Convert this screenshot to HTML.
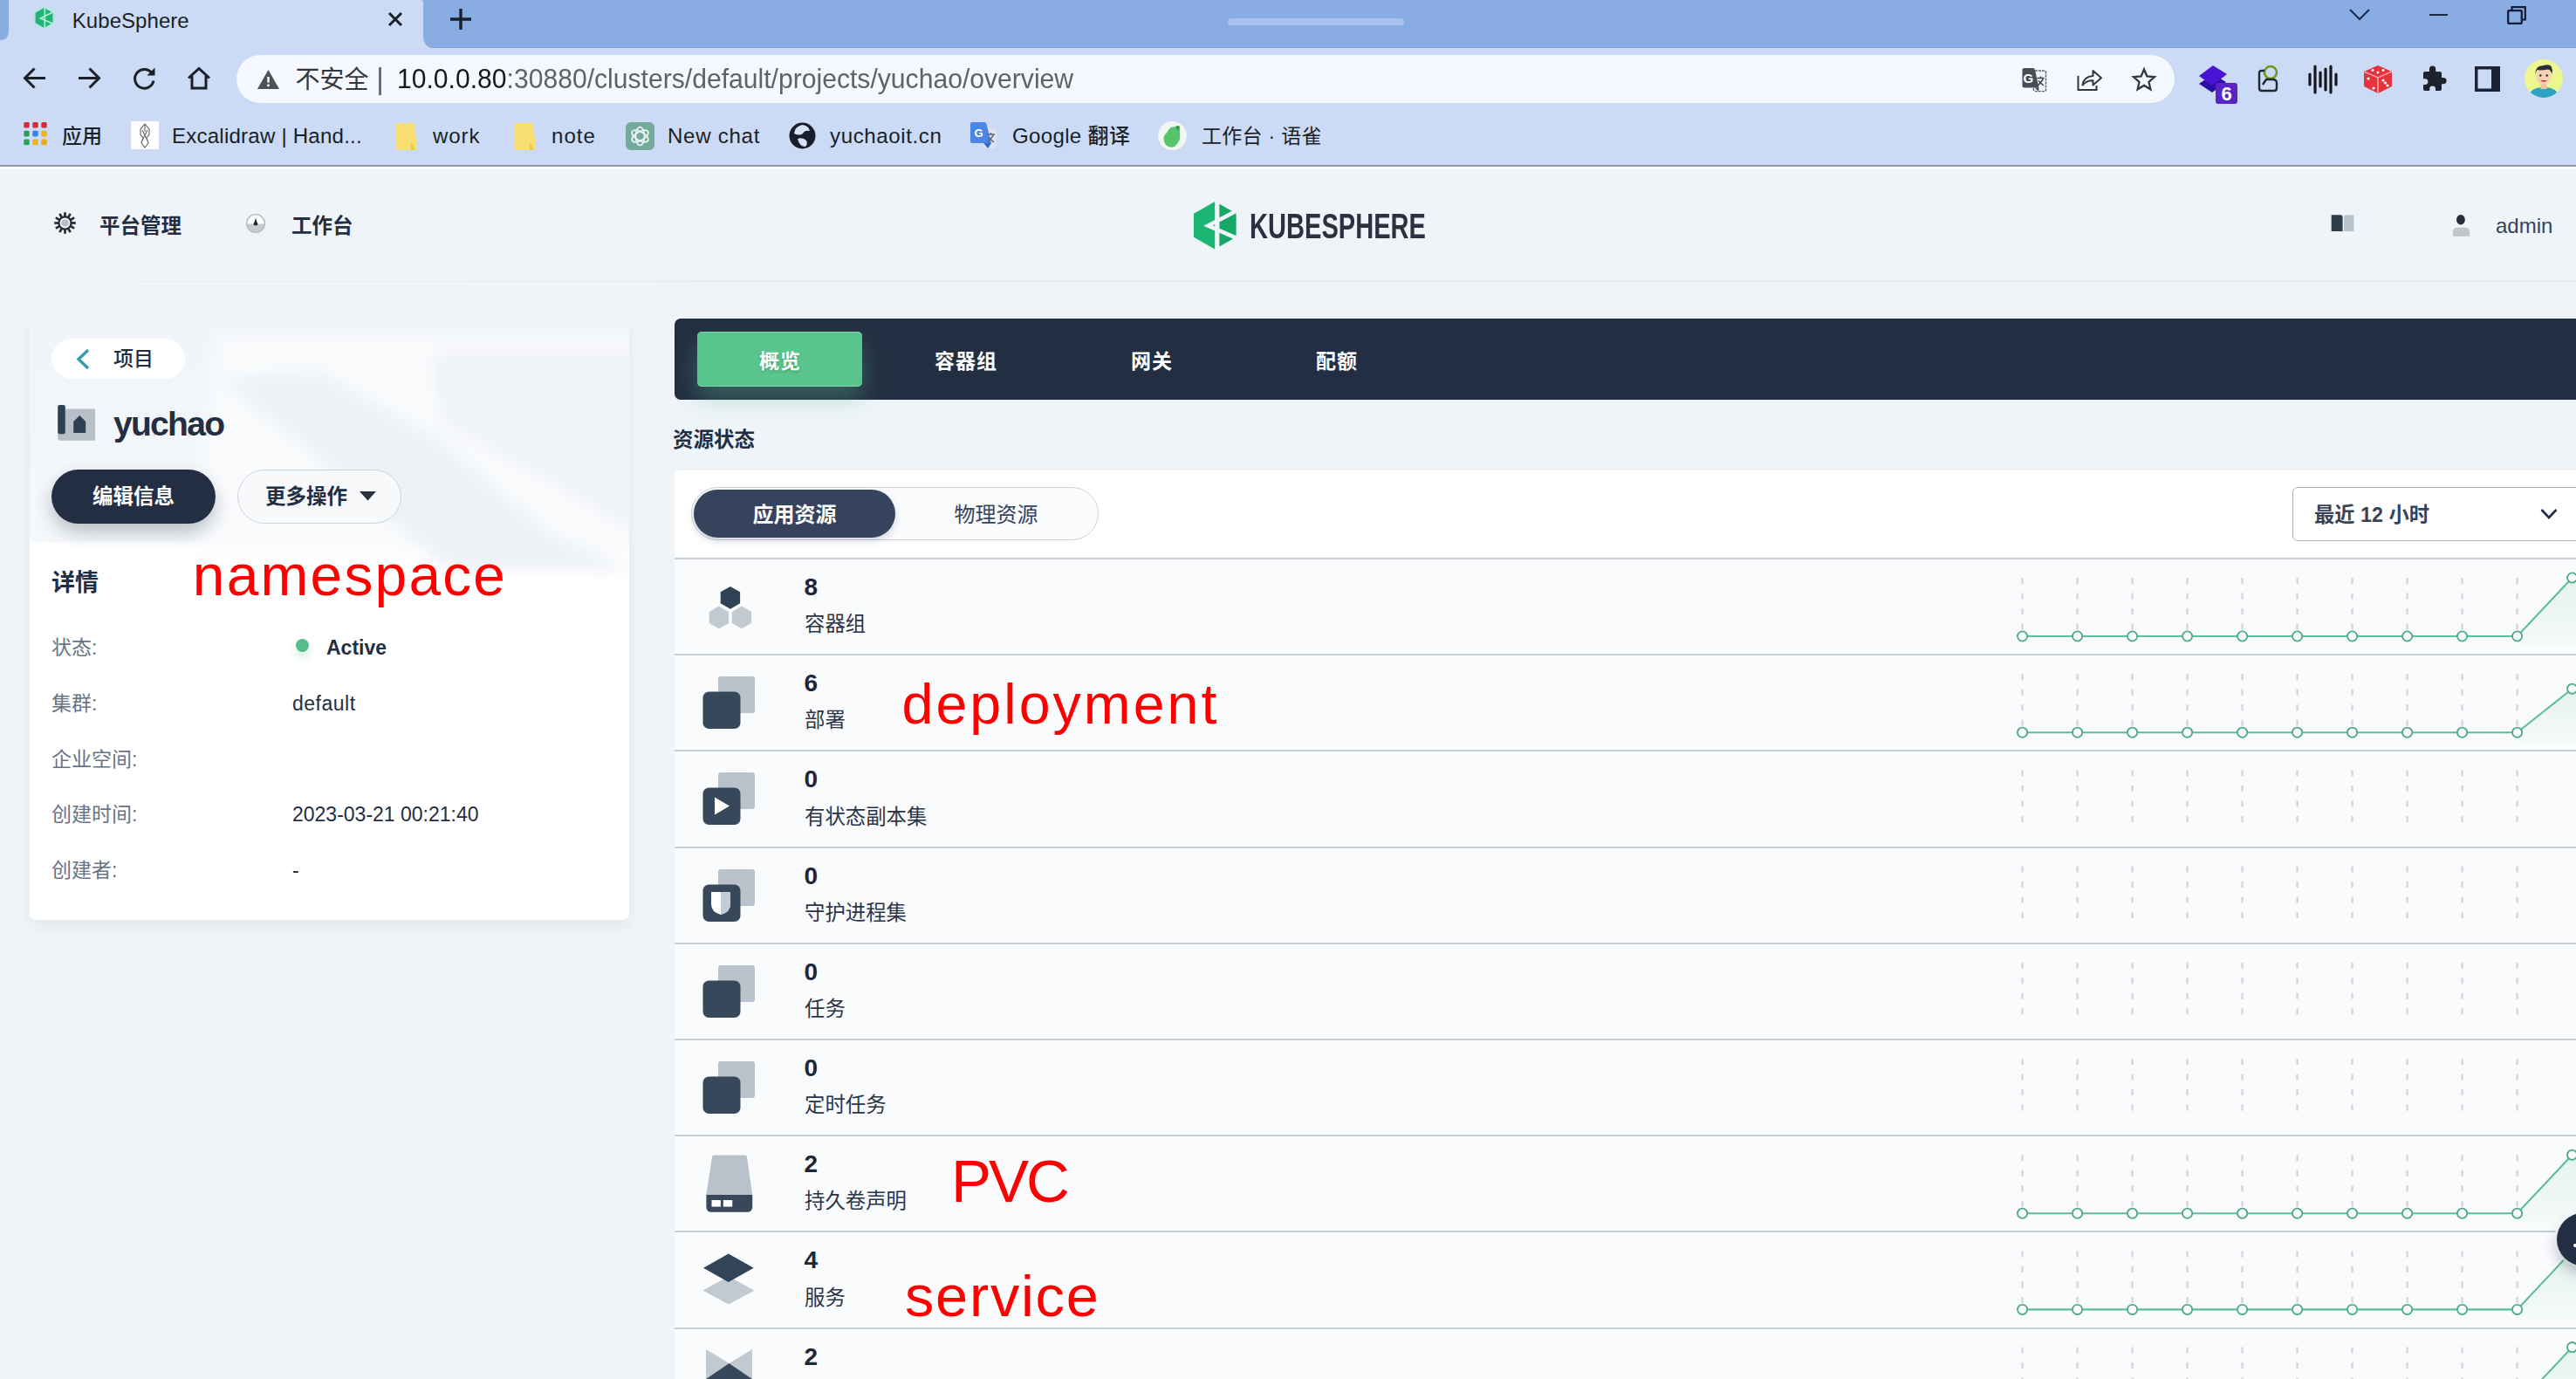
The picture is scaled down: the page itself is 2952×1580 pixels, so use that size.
<!DOCTYPE html>
<html lang="zh-CN">
<head>
<meta charset="utf-8">
<title>KubeSphere</title>
<style>
html,body{margin:0;padding:0}
body{width:2952px;height:1580px;overflow:hidden;position:relative;background:#eff4f9;font-family:"Liberation Sans","Noto Sans CJK SC",sans-serif;color:#242e42}
.a{position:absolute;white-space:nowrap}
svg{position:absolute;overflow:visible}
/* ---------- browser chrome ---------- */
#tabstrip{left:0;top:0;width:2952px;height:56px;background:#89ace3}
#tab{left:10px;top:0;width:474.5px;height:56px;background:#cbdbf5;border-radius:0 3px 0 0}
#toolbar{left:0;top:55px;width:2952px;height:135px;background:#cbdbf5}
#tbline{left:0;top:188.5px;width:2952px;height:2.5px;background:#8f98a6}
#omni{left:271px;top:63px;width:2221px;height:55px;border-radius:28px;background:#f5f8fe}
.ct{font-size:24px;line-height:30px;color:#1b1f27}
.bm{font-size:24.1px;line-height:30px;color:#1b1f27;top:140.5px;letter-spacing:.6px}
/* ---------- page ---------- */
#hline{left:0;top:322px;width:2952px;height:1px;background:linear-gradient(90deg,#eaeff4 0%,#e3e8ee 30%,#dfe4ea 100%)}
.nav{font-size:23.5px;line-height:30px;font-weight:700;color:#242e42;top:244px}
#tabs{left:773px;top:365px;width:2300px;height:93px;border-radius:7px;background:#242e42}
#tabon{left:799px;top:380px;width:189px;height:63px;border-radius:5px;background:#5ac48d;box-shadow:0 14px 26px rgba(85,188,138,.36), inset 0 1px 0 rgba(255,255,255,.25), inset 0 -1px 0 rgba(255,255,255,.25)}
.tb{font-size:23px;line-height:30px;font-weight:700;color:#fff;top:398.5px;width:189px;text-align:center;letter-spacing:1px;text-indent:1px}
#lcard{left:34px;top:364px;width:687px;height:690px;border-radius:7px;background:#fff;box-shadow:0 8px 14px rgba(36,46,66,.05);overflow:hidden}
#limg{left:0;top:0;width:687px;height:257px;background:linear-gradient(180deg,#f0f4f9 0%,#f2f6fa 40%,#f5f8fb 100%)}
.lab{font-size:23px;line-height:30px;color:#687386;left:59px}
.val{font-size:23px;line-height:30px;color:#242e42;left:335px}
.red{color:#ff0000;font-size:69px;line-height:80px;font-family:"Liberation Sans",sans-serif}
#rcard{left:773px;top:539px;width:2300px;height:1100px;background:#fff}
.row{left:773px;width:2300px;height:109px;background:#f9fbfd;border-top:2px solid #c9ced5}
.num{font-size:28px;line-height:30px;font-weight:700;color:#1f2636;left:921.5px}
.nm{font-size:23.4px;line-height:30px;color:#2b3446;left:922px}
</style>
</head>
<body>
<!-- ================= BROWSER CHROME ================= -->
<div class="a" id="tabstrip"></div>
<div class="a" style="left:498px;top:54px;width:2454px;height:1.6px;background:#7c9fd6"></div><div class="a" id="tab"></div>
<div class="a" id="toolbar"></div>
<div class="a" id="tbline"></div><div class="a" style="left:0;top:191px;width:2952px;height:2px;background:#fdfeff"></div>
<div class="a" id="omni"></div>

<!-- tab flare corners -->
<svg style="left:0;top:0" width="520" height="56"><path d="M0 56 V46 Q10 46 10 36 V56Z" fill="#cbdbf5"/><path d="M484.5 38 Q484.5 56 500 56 H484.5Z" fill="#cbdbf5"/></svg>
<!-- favicon -->
<svg style="left:36px;top:6px" width="30" height="30" viewBox="36 6 30 30"><path d="M50.5 8.2 L61.1 14.3 L61.1 26.5 L50.5 32.6 L39.9 26.5 L39.9 14.3Z" fill="#1fb376" stroke="#a9ead0" stroke-width="1.4"/><path d="M51.3 7.5 V33.3" stroke="#b5f0da" stroke-width="1.7"/><path d="M61.5 13.5 L46.5 21 L61.5 27.5" stroke="#b5f0da" stroke-width="1.7" fill="none"/></svg>
<div class="a ct" style="left:82.8px;top:8.5px;font-size:24px;letter-spacing:.05px">KubeSphere</div>
<svg style="left:444px;top:13px" width="18" height="18" viewBox="0 0 18 18"><path d="M2 2 L16 16 M16 2 L2 16" stroke="#1b1f27" stroke-width="3" fill="none"/></svg>
<svg style="left:515px;top:9px" width="26" height="26" viewBox="0 0 26 26"><path d="M13 1 V25 M1 13 H25" stroke="#1b1f27" stroke-width="3.4" fill="none"/></svg>
<div class="a" style="left:1407px;top:21px;width:202px;height:8px;border-radius:4px;background:#a9c3ee"></div>
<!-- window controls -->
<svg style="left:2692px;top:8px" width="24" height="18" viewBox="0 0 24 18"><path d="M1 3 L12 14 L23 3" stroke="#1b2a4a" stroke-width="2" fill="none"/></svg>
<div class="a" style="left:2784px;top:16px;width:21px;height:2px;background:#1b2a4a"></div>
<svg style="left:2873px;top:7px" width="22" height="21" viewBox="0 0 22 21"><rect x="1.2" y="5.2" width="15.6" height="14.6" rx=".8" stroke="#131d36" stroke-width="2.3" fill="none"/><path d="M5.5 5 V1.2 H20.8 V15.5 H17" stroke="#131d36" stroke-width="2.2" fill="none"/></svg>
<!-- nav buttons -->
<svg style="left:26px;top:77px" width="28" height="26" viewBox="0 0 28 26"><path d="M26 12.5 H3 M13.5 1.5 L2.5 12.5 L13.5 23.5" stroke="#1b1f27" stroke-width="3" fill="none" stroke-linejoin="miter"/></svg>
<svg style="left:88px;top:77px" width="28" height="26" viewBox="0 0 28 26"><path d="M2 12.5 H25 M14.5 1.5 L25.5 12.5 L14.5 23.5" stroke="#1b1f27" stroke-width="3" fill="none"/></svg>
<svg style="left:151px;top:76px" width="30" height="28" viewBox="0 0 30 28"><path d="M23.5 8.5 A10.8 10.8 0 1 0 25 16.5" stroke="#1b1f27" stroke-width="3" fill="none"/><path d="M26.5 1.5 V10.5 H17.5Z" fill="#1b1f27"/></svg>
<svg style="left:214px;top:76px" width="28" height="28" viewBox="0 0 28 28"><path d="M2 13.5 L14 2.5 L26 13.5 M6 11 V25 H22 V11" stroke="#1b1f27" stroke-width="3" fill="none" stroke-linejoin="miter"/></svg>
<!-- omnibox content -->
<svg style="left:295px;top:80.3px" width="25" height="22" viewBox="0 0 25 22"><path d="M12.5 0 L25 22 H0Z" fill="#4d5056"/><path d="M12.5 8 V14.6" stroke="#f5f8fe" stroke-width="2.5"/><circle cx="12.5" cy="17.8" r="1.5" fill="#f5f8fe"/></svg>
<div class="a" id="nsafe" style="left:338.5px;top:75px;font-size:28px;line-height:34px;color:#33363d;letter-spacing:0">不安全</div>
<div class="a" style="left:434px;top:76.5px;width:2.6px;height:32px;background:#6b6f78"></div>
<div class="a" id="url" style="left:454.8px;top:73.45px;font-size:31.5px;line-height:34px;color:#5f6368;transform-origin:0 0;transform:scaleX(.956)"><span style="color:#16181d">10.0.0.80</span>:30880/clusters/default/projects/yuchao/overview</div>
<!-- omnibox right icons -->
<svg style="left:2317px;top:77px" width="29" height="29" viewBox="0 0 29 29"><rect x="13.5" y="4" width="14" height="23.6" rx="1.5" fill="#f0f3f9" stroke="#5d6169" stroke-width="1.4" stroke-dasharray="3 1"/><path d="M2.5 1 H12.5 Q14.5 1 15 3 L19.5 23.5 H2.5 Q.5 23.5 .5 21.5 V3 Q.5 1 2.5 1Z" fill="#4a4d54"/><text x="7.3" y="17.8" font-family="Liberation Sans,sans-serif" font-size="15" font-weight="700" fill="#fff" text-anchor="middle">G</text><path d="M17.5 12.5 H25.5 M21.5 10.5 V12.5 M18.5 21 L24.5 13.5 M19 15.5 L24.8 21" stroke="#3e4148" stroke-width="1.5" fill="none"/><path d="M15 23.5 L19 27.6 L19.5 23.5Z" fill="#3a3d44"/></svg>
<svg style="left:2380px;top:78px" width="30" height="27" viewBox="0 0 30 27"><path d="M1.5 9 V25 H22.5 V20" stroke="#33363d" stroke-width="2" fill="none"/><path d="M6.5 19.5 Q8 9.5 18.5 9 V3 L28 11.2 L18.5 19.5 V14.2 Q11 14 6.5 19.5Z" stroke="#33363d" stroke-width="2" fill="none" stroke-linejoin="round"/></svg>
<svg style="left:2442px;top:76px" width="30" height="29" viewBox="0 0 30 29"><path d="M15 3.5 L18.4 11.4 L27 12.2 L20.5 17.9 L22.4 26.3 L15 21.9 L7.6 26.3 L9.5 17.9 L3 12.2 L11.6 11.4Z" stroke="#33363d" stroke-width="2.3" fill="none" stroke-linejoin="miter"/></svg>
<!-- extensions -->
<svg style="left:2519px;top:74px" width="46" height="46" viewBox="0 0 46 46"><path d="M1 22 L17 11 L32 20 L16 32Z" fill="#2b0fa6"/><path d="M1 13 L17 1 L33 11 L16 24Z" fill="#4a12d1"/><rect x="20" y="21" width="25" height="24" rx="3" fill="#5a24c4"/><text x="32.5" y="41" font-family="Liberation Sans,sans-serif" font-size="22" font-weight="700" fill="#fff" text-anchor="middle">6</text></svg>
<svg style="left:2587px;top:74px" width="26" height="32" viewBox="0 0 26 32"><circle cx="15" cy="9" r="7" stroke="#6a9a1f" stroke-width="2.6" fill="none"/><path d="M8 7 H5 Q2 7 2 10 V27 Q2 30 5 30 H19 Q22 30 22 27 V21 Q22 17 17 17 L10 17 L6 23" stroke="#1f2733" stroke-width="2.4" fill="none"/></svg>
<svg style="left:2645px;top:74px" width="34" height="34" viewBox="0 0 34 34"><g stroke="#15171c" stroke-width="3.2" stroke-linecap="round"><path d="M2 11 V23"/><path d="M8 2 V32"/><path d="M14 9 V25"/><path d="M20 5 V29"/><path d="M26 2 V32"/><path d="M32 11 V23"/></g></svg>
<svg style="left:2707px;top:74px" width="36" height="34" viewBox="0 0 36 34"><path d="M18 1 L34 8 V25 L18 33 L2 25 V8Z" fill="#e6323c"/><path d="M2 8 L18 15 L34 8 M18 15 V33" stroke="#f7a1a6" stroke-width="1.6" fill="none"/><g fill="#fff"><circle cx="12" cy="6.5" r="1.5"/><circle cx="18" cy="9" r="1.5"/><circle cx="24" cy="6.5" r="1.5"/><circle cx="7" cy="16" r="1.6"/><circle cx="13" cy="27" r="1.6"/><circle cx="24" cy="18" r="1.6"/><circle cx="29" cy="24" r="1.6"/><circle cx="26.5" cy="21" r="1.6"/></g></svg>
<svg style="left:2772px;top:75px" width="32" height="32" viewBox="0 0 32 32"><path d="M12 4 a3.6 3.6 0 0 1 7.2 0 V7 H24 a2 2 0 0 1 2 2 V14 H28 a3.6 3.6 0 0 1 0 7.2 H26 V27 a2 2 0 0 1 -2 2 H19 V27 a3.4 3.4 0 0 0 -6.8 0 V29 H7 a2 2 0 0 1 -2 -2 V22 H7 a3.4 3.4 0 0 0 0 -6.8 H5 V9 a2 2 0 0 1 2 -2 H12Z" fill="#1e222b"/></svg>
<svg style="left:2836px;top:76px" width="29" height="29" viewBox="0 0 29 29"><rect x="1.75" y="1.75" width="25.5" height="25.5" stroke="#1b2233" stroke-width="3.5" fill="none"/><rect x="19" y="1.75" width="8.25" height="25.5" fill="#1b2233"/></svg>
<svg style="left:2893px;top:68px" width="44" height="44" viewBox="0 0 44 44"><defs><clipPath id="av"><circle cx="22" cy="22" r="22"/></clipPath></defs><g clip-path="url(#av)"><rect width="44" height="44" fill="#eef68f"/><path d="M4 44 Q6 32 22 32 Q38 32 40 44Z" fill="#2aa3c4"/><rect x="18.5" y="26" width="7" height="8" fill="#f1c6a5"/><ellipse cx="22" cy="19" rx="8.6" ry="10" fill="#f6d2b4"/><path d="M12.5 17 Q12 7 22 7 Q29 5 31 9 Q32.5 12 31.5 17 Q30 12 27 11.5 Q18 13 14.5 12 Q13 14 12.5 17Z" fill="#2b2e3a"/><path d="M18 24 Q22 28 26 24Z" fill="#d5414a"/><circle cx="18.3" cy="18.5" r="1.2" fill="#2b2e3a"/><circle cx="25.7" cy="18.5" r="1.2" fill="#2b2e3a"/></g></svg>
<!-- bookmarks -->
<svg style="left:27.3px;top:140.3px" width="28" height="28" viewBox="0 0 28 28"><rect x="0.3" y="0.0" width="6.4" height="6.6" rx="1.6" fill="#d42a35"/><rect x="10.3" y="0.0" width="6.4" height="6.6" rx="1.6" fill="#d42a35"/><rect x="20.3" y="0.0" width="6.4" height="6.6" rx="1.6" fill="#d42a35"/><rect x="0.3" y="9.8" width="6.4" height="6.6" rx="1.6" fill="#2f9e52"/><rect x="10.3" y="9.8" width="6.4" height="6.6" rx="1.6" fill="#2f86e0"/><rect x="20.3" y="9.8" width="6.4" height="6.6" rx="1.6" fill="#efb31b"/><rect x="0.3" y="19.6" width="6.4" height="6.6" rx="1.6" fill="#2f9e52"/><rect x="10.3" y="19.6" width="6.4" height="6.6" rx="1.6" fill="#efb31b"/><rect x="20.3" y="19.6" width="6.4" height="6.6" rx="1.6" fill="#efa51b"/></svg>
<div class="a bm" style="left:71px;top:141px;font-size:23px;letter-spacing:0;font-weight:500">应用</div>
<svg style="left:150px;top:139px" width="32" height="32" viewBox="0 0 32 32"><rect width="32" height="32" fill="#fff"/><path d="M16 3 L21 9 V15 L18 19 L20 25 L16 30 L12 25 L14 19 L11 15 V9Z M16 3 V12 M13 10 L19 22 M19 10 L13 22" stroke="#5d5d66" stroke-width="1.1" fill="none"/></svg>
<div class="a bm" style="left:197px;letter-spacing:.2px">Excalidraw | Hand...</div>
<svg style="left:452px;top:141px" width="27" height="31" viewBox="0 0 27 31"><path d="M2 2 Q2 0 4 0 H21 Q23 0 23 2 L26 28 Q26 31 23 31 H4 Q2 31 2 29Z" fill="#f7df72"/><path d="M19 22 L24 31 H19Z" fill="#e9c94f"/></svg>
<div class="a bm" style="left:496px;letter-spacing:.9px">work</div>
<svg style="left:588px;top:141px" width="27" height="31" viewBox="0 0 27 31"><path d="M2 2 Q2 0 4 0 H21 Q23 0 23 2 L26 28 Q26 31 23 31 H4 Q2 31 2 29Z" fill="#f7df72"/><path d="M19 22 L24 31 H19Z" fill="#e9c94f"/></svg>
<div class="a bm" style="left:632px;letter-spacing:1px">note</div>
<svg style="left:717px;top:140px" width="33" height="32" viewBox="0 0 33 32"><rect width="33" height="32" rx="6" fill="#74aa9c"/><g stroke="#e9f5f1" stroke-width="1.7" fill="none"><ellipse cx="16.5" cy="16" rx="5" ry="10.5"/><ellipse cx="16.5" cy="16" rx="5" ry="10.5" transform="rotate(60 16.5 16)"/><ellipse cx="16.5" cy="16" rx="5" ry="10.5" transform="rotate(120 16.5 16)"/></g></svg>
<div class="a bm" style="left:765px;letter-spacing:.7px">New chat</div>
<svg style="left:904px;top:140px" width="31" height="31" viewBox="0 0 31 31"><circle cx="15.5" cy="15.5" r="15" fill="#1a1e28"/><path d="M15 3 Q23 4 24 10 Q18 9 16 13 Q12 16 6 13 Q7 5 15 3Z M10 19 Q16 17 20 21 Q22 25 19 28 Q12 28 10 19Z" fill="#d6e2f7"/></svg>
<div class="a bm" style="left:951px">yuchaoit.cn</div>
<svg style="left:1111px;top:139px" width="32" height="34" viewBox="0 0 32 34"><path d="M10 8 H29 Q31 8 31 10 V29 Q31 31 29 31 H16Z" fill="#dfe3ec"/><path d="M3 1 H17 Q19 1 19.5 3 L25 25 H3 Q1 25 1 23 V3 Q1 1 3 1Z" fill="#4a86e8"/><path d="M16 25 L21 31 L25 25Z" fill="#3367c8"/><text x="10.5" y="18" font-family="Liberation Sans,sans-serif" font-size="13" font-weight="700" fill="#fff" text-anchor="middle">G</text><path d="M20 15 H29 M24.5 13 V15 M21 24 L27.5 16 M22 18.5 L28 24" stroke="#5d6576" stroke-width="1.5" fill="none"/></svg>
<div class="a bm" style="left:1160px;letter-spacing:.3px">Google <span style="font-size:24px;font-weight:500;letter-spacing:.5px">翻译</span></div>
<svg style="left:1327px;top:139px" width="33" height="33" viewBox="0 0 33 33"><circle cx="16.5" cy="16.5" r="16.5" fill="#f2f7f1"/><path d="M9 27 Q3 18 11 12 Q13 6 20 6 Q21 10 25 13 Q27 22 19 29 Q13 31 9 27Z" fill="#55c46a"/><path d="M20 6 Q23 4 25 6 Q24 10 25 13 Q21 10 20 6Z" fill="#2f9e4a"/></svg>
<div class="a bm" style="left:1377px;top:141px;font-size:23px;letter-spacing:.3px">工作台 · 语雀</div>

<!-- ================= PAGE ================= -->
<div class="a" id="hline"></div>

<!-- gear -->
<svg style="left:61.1px;top:241.9px" width="27" height="27" viewBox="-13.5 -13.5 27 27"><g stroke="#262c38" stroke-width="2.7" fill="none"><path d="M0 -7.4 V-12.3" transform="rotate(0)"/><path d="M0 -7.4 V-12.3" transform="rotate(30)"/><path d="M0 -7.4 V-12.3" transform="rotate(60)"/><path d="M0 -7.4 V-12.3" transform="rotate(90)"/><path d="M0 -7.4 V-12.3" transform="rotate(120)"/><path d="M0 -7.4 V-12.3" transform="rotate(150)"/><path d="M0 -7.4 V-12.3" transform="rotate(180)"/><path d="M0 -7.4 V-12.3" transform="rotate(210)"/><path d="M0 -7.4 V-12.3" transform="rotate(240)"/><path d="M0 -7.4 V-12.3" transform="rotate(270)"/><path d="M0 -7.4 V-12.3" transform="rotate(300)"/><path d="M0 -7.4 V-12.3" transform="rotate(330)"/></g><circle r="7.1" fill="#fff" stroke="#262c38" stroke-width="2.3"/><circle r="4.3" fill="#b6bcc9"/></svg>
<div class="a nav" id="nav1" style="left:114px">平台管理</div>
<!-- dashboard icon -->
<svg style="left:281.4px;top:244.1px" width="24" height="24" viewBox="-12 -12 24 24"><circle r="10.4" fill="#fdfefe"/><path d="M-10.4 .6 A10.4 10.4 0 0 0 10.4 .6Z" fill="#c6cbd1"/><circle r="10.4" fill="none" stroke="#b4bac1" stroke-width="1.4"/><path d="M0 -6.6 Q1 -2 2.6 .8 Q2 2.6 0 2.6 Q-2 2.6 -2.6 .8 Q-1 -2 0 -6.6Z" fill="#20252e"/></svg>
<div class="a nav" id="nav2" style="left:334px">工作台</div>
<!-- logo -->
<svg style="left:1366px;top:228px" width="54" height="60" viewBox="1366 228 54 60"><path d="M1392.2 231 V285.6 L1368 271.8 V244.8Z" fill="#1bb673"/><path d="M1397.4 233.8 L1416.6 244.6 V271.4 L1397.4 282.6Z" fill="#17a868"/><path d="M1420 240 L1384.5 258.6 L1420 274.2" stroke="#eff4f9" stroke-width="4.6" fill="none"/><path d="M1409 236 L1420 242 V232Z" fill="#eff4f9"/><path d="M1409 281 L1420 275 V286Z" fill="#eff4f9"/></svg>
<div class="a" id="logot" style="left:1431.5px;top:235.5px;font-size:40px;line-height:46px;font-weight:700;color:#2b3140;transform-origin:0 0;transform:scaleX(.727)">KUBESPHERE</div>
<!-- doc icon -->
<svg style="left:2671px;top:246px" width="28" height="20" viewBox="2671 246 28 20"><path d="M2671.7 246.3 H2682 Q2684.6 246.3 2684.6 249 V265 H2671.7Z" fill="#2f3d4b"/><path d="M2686 265 V249 Q2686 246.3 2688.6 246.3 H2697.4 V265Z" fill="#bbc4cd"/></svg>
<!-- user icon -->
<svg style="left:2809px;top:245px" width="24" height="28" viewBox="2809 245 24 28"><ellipse cx="2819.9" cy="251.7" rx="4.9" ry="5.7" fill="#262c38"/><path d="M2811 270.8 V265.5 Q2811 260.7 2815.8 260.7 H2825.2 Q2830 260.7 2830 265.5 V270.8Z" fill="#bfc6cc"/></svg>
<div class="a" id="admin" style="left:2860px;top:244px;font-size:24px;line-height:30px;color:#36435c">admin</div>
<!-- tabs -->
<div class="a" id="tabs"></div>
<div class="a" id="tabon"></div>
<div class="a tb" style="left:799px;text-shadow:0 2px 3px rgba(0,60,30,.25)">概览</div>
<div class="a tb" style="left:1012px">容器组</div>
<div class="a tb" style="left:1225px">网关</div>
<div class="a tb" style="left:1437px">配额</div>


<div class="a" id="lcard"><div class="a" id="limg"></div>
<svg style="left:0;top:0" width="687" height="257" viewBox="0 0 687 257"><defs><filter id="bl" x="-20%" y="-20%" width="140%" height="140%"><feGaussianBlur stdDeviation="9"/></filter></defs><g filter="url(#bl)"><path d="M215 20 L700 20 L700 270 L190 270Z" fill="#f9fbfd"/><path d="M215 70 L330 60 L470 140 L600 250 L700 290 L480 290 L330 160Z" fill="#eef2f6"/><path d="M460 40 L700 40 L700 250 L600 190 L470 120Z" fill="#f0f3f7"/></g></svg>
</div>
<!-- back pill -->
<div class="a" style="left:59px;top:388px;width:153px;height:46px;border-radius:23px;background:#fff"></div>
<svg style="left:86px;top:399px" width="18" height="25" viewBox="0 0 18 25"><path d="M15 2 L4 12.5 L15 23" stroke="#329dae" stroke-width="3.4" fill="none"/></svg>
<div class="a" id="proj" style="left:130px;top:396px;font-size:23px;line-height:30px;font-weight:500;color:#242e42">项目</div>
<!-- project icon -->
<svg style="left:65px;top:463px" width="46" height="43" viewBox="65 463 46 43"><path d="M74.8 468.4 H109 V504.7 H69 Q66.2 504.7 66.2 502 V496 H74.8Z" fill="#b7bfc8"/><rect x="66.2" y="464" width="8.6" height="33.2" rx="2.2" fill="#2f4050"/><path d="M84.2 496 V483 L91.2 476 L98.2 483 V496Z" fill="#2f4050"/></svg>
<div class="a" id="yuchao" style="left:130px;top:462px;font-size:39px;line-height:48px;font-weight:700;color:#242e42;letter-spacing:-1.7px">yuchao</div>
<!-- buttons -->
<div class="a" style="left:59px;top:538px;width:188px;height:62px;border-radius:31px;background:#242e42;box-shadow:0 10px 20px rgba(36,46,66,.28)"></div>
<div class="a" id="bedit" style="left:59px;top:553px;width:188px;text-align:center;font-size:23.5px;line-height:32px;font-weight:700;color:#fff">编辑信息</div>
<div class="a" style="left:272px;top:538px;width:186px;height:60px;border-radius:31px;background:#f7f9fb;border:1px solid #cdd4dc"></div>
<div class="a" id="bmore" style="left:304px;top:553px;font-size:23.5px;line-height:32px;font-weight:700;color:#242e42">更多操作</div>
<svg style="left:412px;top:563px" width="19" height="11" viewBox="0 0 19 11"><path d="M0 0 H19 L9.5 10.5Z" fill="#2b3240"/></svg>
<!-- details -->
<div class="a" id="dtl" style="left:59px;top:649.5px;font-size:27px;line-height:36px;font-weight:700;color:#242e42">详情</div>
<div class="a red" id="r1" style="left:220.8px;top:619.1px;font-size:65.8px;letter-spacing:2.25px">namespace</div>
<div class="a lab" style="top:727px">状态:</div>
<div class="a" style="left:339px;top:731px;width:15px;height:15px;border-radius:50%;background:#55bc8a;box-shadow:0 6px 10px rgba(85,188,138,.25);margin-top:.5px"></div>
<div class="a val" id="active" style="left:374px;top:727px;font-weight:700">Active</div>
<div class="a lab" style="top:791px">集群:</div>
<div class="a val" style="top:791px;letter-spacing:.5px">default</div>
<div class="a lab" style="top:855px">企业空间:</div>
<div class="a lab" style="top:918px">创建时间:</div>
<div class="a val" id="ctime" style="top:918px">2023-03-21 00:21:40</div>
<div class="a lab" style="top:982px">创建者:</div>
<div class="a val" style="top:982px">-</div>

<div class="a" style="left:771px;top:489px;font-size:23.5px;line-height:30px;font-weight:700;color:#242e42" id="rstat">资源状态</div>
<div class="a" id="rcard"></div>
<div class="a" style="left:792px;top:558px;width:465px;height:59px;border-radius:31px;border:1px solid #ccd3db;background:#f9fbfd"></div>
<div class="a" style="left:795px;top:561px;width:231px;height:55px;border-radius:28px;background:#36435c;box-shadow:0 4px 8px rgba(54,67,92,.2)"></div>
<div class="a" id="tg1" style="left:795px;top:574.5px;width:231px;text-align:center;font-size:24px;line-height:30px;font-weight:700;color:#fff">应用资源</div>
<div class="a" id="tg2" style="left:1026px;top:574.5px;width:231px;text-align:center;font-size:24px;line-height:30px;color:#36435c">物理资源</div>
<div class="a" style="left:2627px;top:558px;width:400px;height:60px;border-radius:6px;border:1px solid #abb4be;background:#fff"></div>
<div class="a" id="sel" style="left:2652px;top:575px;font-size:23.3px;line-height:30px;font-weight:700;color:#36435c">最近 12 小时</div>
<svg style="left:2911px;top:582px" width="20" height="14" viewBox="0 0 20 14"><path d="M1.5 2 L10 11 L18.5 2" stroke="#242e42" stroke-width="2.6" fill="none"/></svg>
<div class="a row" style="top:639.0px"></div>
<div class="a num" style="top:658.0px">8</div>
<div class="a nm" style="top:700.2px">容器组</div>
<div class="a row" style="top:749.2px"></div>
<div class="a num" style="top:768.2px">6</div>
<div class="a nm" style="top:810.4px">部署</div>
<div class="a row" style="top:859.4px"></div>
<div class="a num" style="top:878.4px">0</div>
<div class="a nm" style="top:920.6px">有状态副本集</div>
<div class="a row" style="top:969.6px"></div>
<div class="a num" style="top:988.6px">0</div>
<div class="a nm" style="top:1030.8px">守护进程集</div>
<div class="a row" style="top:1079.8px"></div>
<div class="a num" style="top:1098.8px">0</div>
<div class="a nm" style="top:1141.0px">任务</div>
<div class="a row" style="top:1190.0px"></div>
<div class="a num" style="top:1209.0px">0</div>
<div class="a nm" style="top:1251.2px">定时任务</div>
<div class="a row" style="top:1300.2px"></div>
<div class="a num" style="top:1319.2px">2</div>
<div class="a nm" style="top:1361.4px">持久卷声明</div>
<div class="a row" style="top:1410.4px"></div>
<div class="a num" style="top:1429.4px">4</div>
<div class="a nm" style="top:1471.6px">服务</div>
<div class="a row" style="top:1520.6px"></div>
<div class="a num" style="top:1539.6px">2</div>
<div class="a nm" style="top:1581.8px">应用路由</div>
<svg style="left:0;top:0" width="2952" height="1580" viewBox="0 0 2952 1580">
<defs><linearGradient id="gf" x1="0" y1="0" x2="0" y2="1"><stop offset="0" stop-color="#55bc8a" stop-opacity=".13"/><stop offset="1" stop-color="#55bc8a" stop-opacity=".02"/></linearGradient></defs>
<path d="M2317.6 662.0 V729.0" stroke="#d2d5da" stroke-width="2.3" stroke-dasharray="7 10.5" fill="none"/>
<path d="M2380.6 662.0 V729.0" stroke="#d2d5da" stroke-width="2.3" stroke-dasharray="7 10.5" fill="none"/>
<path d="M2443.6 662.0 V729.0" stroke="#d2d5da" stroke-width="2.3" stroke-dasharray="7 10.5" fill="none"/>
<path d="M2506.6 662.0 V729.0" stroke="#d2d5da" stroke-width="2.3" stroke-dasharray="7 10.5" fill="none"/>
<path d="M2569.6 662.0 V729.0" stroke="#d2d5da" stroke-width="2.3" stroke-dasharray="7 10.5" fill="none"/>
<path d="M2632.6 662.0 V729.0" stroke="#d2d5da" stroke-width="2.3" stroke-dasharray="7 10.5" fill="none"/>
<path d="M2695.6 662.0 V729.0" stroke="#d2d5da" stroke-width="2.3" stroke-dasharray="7 10.5" fill="none"/>
<path d="M2758.6 662.0 V729.0" stroke="#d2d5da" stroke-width="2.3" stroke-dasharray="7 10.5" fill="none"/>
<path d="M2821.6 662.0 V729.0" stroke="#d2d5da" stroke-width="2.3" stroke-dasharray="7 10.5" fill="none"/>
<path d="M2884.6 662.0 V729.0" stroke="#d2d5da" stroke-width="2.3" stroke-dasharray="7 10.5" fill="none"/>
<path d="M2884.6 729.0 L2947.6 662.0 L2960 662.0 V741.0 H2884.6Z" fill="url(#gf)"/>
<polyline points="2317.6,729.0 2380.6,729.0 2443.6,729.0 2506.6,729.0 2569.6,729.0 2632.6,729.0 2695.6,729.0 2758.6,729.0 2821.6,729.0 2884.6,729.0 2947.6,662.0" stroke="#5dbd98" stroke-width="2.1" fill="none"/>
<circle cx="2317.6" cy="729.0" r="5.6" fill="#f9fbfd" stroke="#4fa98a" stroke-width="1.8"/>
<circle cx="2380.6" cy="729.0" r="5.6" fill="#f9fbfd" stroke="#4fa98a" stroke-width="1.8"/>
<circle cx="2443.6" cy="729.0" r="5.6" fill="#f9fbfd" stroke="#4fa98a" stroke-width="1.8"/>
<circle cx="2506.6" cy="729.0" r="5.6" fill="#f9fbfd" stroke="#4fa98a" stroke-width="1.8"/>
<circle cx="2569.6" cy="729.0" r="5.6" fill="#f9fbfd" stroke="#4fa98a" stroke-width="1.8"/>
<circle cx="2632.6" cy="729.0" r="5.6" fill="#f9fbfd" stroke="#4fa98a" stroke-width="1.8"/>
<circle cx="2695.6" cy="729.0" r="5.6" fill="#f9fbfd" stroke="#4fa98a" stroke-width="1.8"/>
<circle cx="2758.6" cy="729.0" r="5.6" fill="#f9fbfd" stroke="#4fa98a" stroke-width="1.8"/>
<circle cx="2821.6" cy="729.0" r="5.6" fill="#f9fbfd" stroke="#4fa98a" stroke-width="1.8"/>
<circle cx="2884.6" cy="729.0" r="5.6" fill="#f9fbfd" stroke="#4fa98a" stroke-width="1.8"/>
<circle cx="2947.6" cy="662.0" r="5.6" fill="#f9fbfd" stroke="#4fa98a" stroke-width="1.8"/>
<path d="M2317.6 772.2 V839.2" stroke="#d2d5da" stroke-width="2.3" stroke-dasharray="7 10.5" fill="none"/>
<path d="M2380.6 772.2 V839.2" stroke="#d2d5da" stroke-width="2.3" stroke-dasharray="7 10.5" fill="none"/>
<path d="M2443.6 772.2 V839.2" stroke="#d2d5da" stroke-width="2.3" stroke-dasharray="7 10.5" fill="none"/>
<path d="M2506.6 772.2 V839.2" stroke="#d2d5da" stroke-width="2.3" stroke-dasharray="7 10.5" fill="none"/>
<path d="M2569.6 772.2 V839.2" stroke="#d2d5da" stroke-width="2.3" stroke-dasharray="7 10.5" fill="none"/>
<path d="M2632.6 772.2 V839.2" stroke="#d2d5da" stroke-width="2.3" stroke-dasharray="7 10.5" fill="none"/>
<path d="M2695.6 772.2 V839.2" stroke="#d2d5da" stroke-width="2.3" stroke-dasharray="7 10.5" fill="none"/>
<path d="M2758.6 772.2 V839.2" stroke="#d2d5da" stroke-width="2.3" stroke-dasharray="7 10.5" fill="none"/>
<path d="M2821.6 772.2 V839.2" stroke="#d2d5da" stroke-width="2.3" stroke-dasharray="7 10.5" fill="none"/>
<path d="M2884.6 772.2 V839.2" stroke="#d2d5da" stroke-width="2.3" stroke-dasharray="7 10.5" fill="none"/>
<path d="M2884.6 839.2 L2947.6 789.2 L2960 789.2 V851.2 H2884.6Z" fill="url(#gf)"/>
<polyline points="2317.6,839.2 2380.6,839.2 2443.6,839.2 2506.6,839.2 2569.6,839.2 2632.6,839.2 2695.6,839.2 2758.6,839.2 2821.6,839.2 2884.6,839.2 2947.6,789.2" stroke="#5dbd98" stroke-width="2.1" fill="none"/>
<circle cx="2317.6" cy="839.2" r="5.6" fill="#f9fbfd" stroke="#4fa98a" stroke-width="1.8"/>
<circle cx="2380.6" cy="839.2" r="5.6" fill="#f9fbfd" stroke="#4fa98a" stroke-width="1.8"/>
<circle cx="2443.6" cy="839.2" r="5.6" fill="#f9fbfd" stroke="#4fa98a" stroke-width="1.8"/>
<circle cx="2506.6" cy="839.2" r="5.6" fill="#f9fbfd" stroke="#4fa98a" stroke-width="1.8"/>
<circle cx="2569.6" cy="839.2" r="5.6" fill="#f9fbfd" stroke="#4fa98a" stroke-width="1.8"/>
<circle cx="2632.6" cy="839.2" r="5.6" fill="#f9fbfd" stroke="#4fa98a" stroke-width="1.8"/>
<circle cx="2695.6" cy="839.2" r="5.6" fill="#f9fbfd" stroke="#4fa98a" stroke-width="1.8"/>
<circle cx="2758.6" cy="839.2" r="5.6" fill="#f9fbfd" stroke="#4fa98a" stroke-width="1.8"/>
<circle cx="2821.6" cy="839.2" r="5.6" fill="#f9fbfd" stroke="#4fa98a" stroke-width="1.8"/>
<circle cx="2884.6" cy="839.2" r="5.6" fill="#f9fbfd" stroke="#4fa98a" stroke-width="1.8"/>
<circle cx="2947.6" cy="789.2" r="5.6" fill="#f9fbfd" stroke="#4fa98a" stroke-width="1.8"/>
<path d="M2317.6 882.4 V949.4" stroke="#d2d5da" stroke-width="2.3" stroke-dasharray="7 10.5" fill="none"/>
<path d="M2380.6 882.4 V949.4" stroke="#d2d5da" stroke-width="2.3" stroke-dasharray="7 10.5" fill="none"/>
<path d="M2443.6 882.4 V949.4" stroke="#d2d5da" stroke-width="2.3" stroke-dasharray="7 10.5" fill="none"/>
<path d="M2506.6 882.4 V949.4" stroke="#d2d5da" stroke-width="2.3" stroke-dasharray="7 10.5" fill="none"/>
<path d="M2569.6 882.4 V949.4" stroke="#d2d5da" stroke-width="2.3" stroke-dasharray="7 10.5" fill="none"/>
<path d="M2632.6 882.4 V949.4" stroke="#d2d5da" stroke-width="2.3" stroke-dasharray="7 10.5" fill="none"/>
<path d="M2695.6 882.4 V949.4" stroke="#d2d5da" stroke-width="2.3" stroke-dasharray="7 10.5" fill="none"/>
<path d="M2758.6 882.4 V949.4" stroke="#d2d5da" stroke-width="2.3" stroke-dasharray="7 10.5" fill="none"/>
<path d="M2821.6 882.4 V949.4" stroke="#d2d5da" stroke-width="2.3" stroke-dasharray="7 10.5" fill="none"/>
<path d="M2884.6 882.4 V949.4" stroke="#d2d5da" stroke-width="2.3" stroke-dasharray="7 10.5" fill="none"/>
<path d="M2317.6 992.6 V1059.6" stroke="#d2d5da" stroke-width="2.3" stroke-dasharray="7 10.5" fill="none"/>
<path d="M2380.6 992.6 V1059.6" stroke="#d2d5da" stroke-width="2.3" stroke-dasharray="7 10.5" fill="none"/>
<path d="M2443.6 992.6 V1059.6" stroke="#d2d5da" stroke-width="2.3" stroke-dasharray="7 10.5" fill="none"/>
<path d="M2506.6 992.6 V1059.6" stroke="#d2d5da" stroke-width="2.3" stroke-dasharray="7 10.5" fill="none"/>
<path d="M2569.6 992.6 V1059.6" stroke="#d2d5da" stroke-width="2.3" stroke-dasharray="7 10.5" fill="none"/>
<path d="M2632.6 992.6 V1059.6" stroke="#d2d5da" stroke-width="2.3" stroke-dasharray="7 10.5" fill="none"/>
<path d="M2695.6 992.6 V1059.6" stroke="#d2d5da" stroke-width="2.3" stroke-dasharray="7 10.5" fill="none"/>
<path d="M2758.6 992.6 V1059.6" stroke="#d2d5da" stroke-width="2.3" stroke-dasharray="7 10.5" fill="none"/>
<path d="M2821.6 992.6 V1059.6" stroke="#d2d5da" stroke-width="2.3" stroke-dasharray="7 10.5" fill="none"/>
<path d="M2884.6 992.6 V1059.6" stroke="#d2d5da" stroke-width="2.3" stroke-dasharray="7 10.5" fill="none"/>
<path d="M2317.6 1102.8 V1169.8" stroke="#d2d5da" stroke-width="2.3" stroke-dasharray="7 10.5" fill="none"/>
<path d="M2380.6 1102.8 V1169.8" stroke="#d2d5da" stroke-width="2.3" stroke-dasharray="7 10.5" fill="none"/>
<path d="M2443.6 1102.8 V1169.8" stroke="#d2d5da" stroke-width="2.3" stroke-dasharray="7 10.5" fill="none"/>
<path d="M2506.6 1102.8 V1169.8" stroke="#d2d5da" stroke-width="2.3" stroke-dasharray="7 10.5" fill="none"/>
<path d="M2569.6 1102.8 V1169.8" stroke="#d2d5da" stroke-width="2.3" stroke-dasharray="7 10.5" fill="none"/>
<path d="M2632.6 1102.8 V1169.8" stroke="#d2d5da" stroke-width="2.3" stroke-dasharray="7 10.5" fill="none"/>
<path d="M2695.6 1102.8 V1169.8" stroke="#d2d5da" stroke-width="2.3" stroke-dasharray="7 10.5" fill="none"/>
<path d="M2758.6 1102.8 V1169.8" stroke="#d2d5da" stroke-width="2.3" stroke-dasharray="7 10.5" fill="none"/>
<path d="M2821.6 1102.8 V1169.8" stroke="#d2d5da" stroke-width="2.3" stroke-dasharray="7 10.5" fill="none"/>
<path d="M2884.6 1102.8 V1169.8" stroke="#d2d5da" stroke-width="2.3" stroke-dasharray="7 10.5" fill="none"/>
<path d="M2317.6 1213.0 V1280.0" stroke="#d2d5da" stroke-width="2.3" stroke-dasharray="7 10.5" fill="none"/>
<path d="M2380.6 1213.0 V1280.0" stroke="#d2d5da" stroke-width="2.3" stroke-dasharray="7 10.5" fill="none"/>
<path d="M2443.6 1213.0 V1280.0" stroke="#d2d5da" stroke-width="2.3" stroke-dasharray="7 10.5" fill="none"/>
<path d="M2506.6 1213.0 V1280.0" stroke="#d2d5da" stroke-width="2.3" stroke-dasharray="7 10.5" fill="none"/>
<path d="M2569.6 1213.0 V1280.0" stroke="#d2d5da" stroke-width="2.3" stroke-dasharray="7 10.5" fill="none"/>
<path d="M2632.6 1213.0 V1280.0" stroke="#d2d5da" stroke-width="2.3" stroke-dasharray="7 10.5" fill="none"/>
<path d="M2695.6 1213.0 V1280.0" stroke="#d2d5da" stroke-width="2.3" stroke-dasharray="7 10.5" fill="none"/>
<path d="M2758.6 1213.0 V1280.0" stroke="#d2d5da" stroke-width="2.3" stroke-dasharray="7 10.5" fill="none"/>
<path d="M2821.6 1213.0 V1280.0" stroke="#d2d5da" stroke-width="2.3" stroke-dasharray="7 10.5" fill="none"/>
<path d="M2884.6 1213.0 V1280.0" stroke="#d2d5da" stroke-width="2.3" stroke-dasharray="7 10.5" fill="none"/>
<path d="M2317.6 1323.2 V1390.2" stroke="#d2d5da" stroke-width="2.3" stroke-dasharray="7 10.5" fill="none"/>
<path d="M2380.6 1323.2 V1390.2" stroke="#d2d5da" stroke-width="2.3" stroke-dasharray="7 10.5" fill="none"/>
<path d="M2443.6 1323.2 V1390.2" stroke="#d2d5da" stroke-width="2.3" stroke-dasharray="7 10.5" fill="none"/>
<path d="M2506.6 1323.2 V1390.2" stroke="#d2d5da" stroke-width="2.3" stroke-dasharray="7 10.5" fill="none"/>
<path d="M2569.6 1323.2 V1390.2" stroke="#d2d5da" stroke-width="2.3" stroke-dasharray="7 10.5" fill="none"/>
<path d="M2632.6 1323.2 V1390.2" stroke="#d2d5da" stroke-width="2.3" stroke-dasharray="7 10.5" fill="none"/>
<path d="M2695.6 1323.2 V1390.2" stroke="#d2d5da" stroke-width="2.3" stroke-dasharray="7 10.5" fill="none"/>
<path d="M2758.6 1323.2 V1390.2" stroke="#d2d5da" stroke-width="2.3" stroke-dasharray="7 10.5" fill="none"/>
<path d="M2821.6 1323.2 V1390.2" stroke="#d2d5da" stroke-width="2.3" stroke-dasharray="7 10.5" fill="none"/>
<path d="M2884.6 1323.2 V1390.2" stroke="#d2d5da" stroke-width="2.3" stroke-dasharray="7 10.5" fill="none"/>
<path d="M2884.6 1390.2 L2947.6 1323.2 L2960 1323.2 V1402.2 H2884.6Z" fill="url(#gf)"/>
<polyline points="2317.6,1390.2 2380.6,1390.2 2443.6,1390.2 2506.6,1390.2 2569.6,1390.2 2632.6,1390.2 2695.6,1390.2 2758.6,1390.2 2821.6,1390.2 2884.6,1390.2 2947.6,1323.2" stroke="#5dbd98" stroke-width="2.1" fill="none"/>
<circle cx="2317.6" cy="1390.2" r="5.6" fill="#f9fbfd" stroke="#4fa98a" stroke-width="1.8"/>
<circle cx="2380.6" cy="1390.2" r="5.6" fill="#f9fbfd" stroke="#4fa98a" stroke-width="1.8"/>
<circle cx="2443.6" cy="1390.2" r="5.6" fill="#f9fbfd" stroke="#4fa98a" stroke-width="1.8"/>
<circle cx="2506.6" cy="1390.2" r="5.6" fill="#f9fbfd" stroke="#4fa98a" stroke-width="1.8"/>
<circle cx="2569.6" cy="1390.2" r="5.6" fill="#f9fbfd" stroke="#4fa98a" stroke-width="1.8"/>
<circle cx="2632.6" cy="1390.2" r="5.6" fill="#f9fbfd" stroke="#4fa98a" stroke-width="1.8"/>
<circle cx="2695.6" cy="1390.2" r="5.6" fill="#f9fbfd" stroke="#4fa98a" stroke-width="1.8"/>
<circle cx="2758.6" cy="1390.2" r="5.6" fill="#f9fbfd" stroke="#4fa98a" stroke-width="1.8"/>
<circle cx="2821.6" cy="1390.2" r="5.6" fill="#f9fbfd" stroke="#4fa98a" stroke-width="1.8"/>
<circle cx="2884.6" cy="1390.2" r="5.6" fill="#f9fbfd" stroke="#4fa98a" stroke-width="1.8"/>
<circle cx="2947.6" cy="1323.2" r="5.6" fill="#f9fbfd" stroke="#4fa98a" stroke-width="1.8"/>
<path d="M2317.6 1433.4 V1500.4" stroke="#d2d5da" stroke-width="2.3" stroke-dasharray="7 10.5" fill="none"/>
<path d="M2380.6 1433.4 V1500.4" stroke="#d2d5da" stroke-width="2.3" stroke-dasharray="7 10.5" fill="none"/>
<path d="M2443.6 1433.4 V1500.4" stroke="#d2d5da" stroke-width="2.3" stroke-dasharray="7 10.5" fill="none"/>
<path d="M2506.6 1433.4 V1500.4" stroke="#d2d5da" stroke-width="2.3" stroke-dasharray="7 10.5" fill="none"/>
<path d="M2569.6 1433.4 V1500.4" stroke="#d2d5da" stroke-width="2.3" stroke-dasharray="7 10.5" fill="none"/>
<path d="M2632.6 1433.4 V1500.4" stroke="#d2d5da" stroke-width="2.3" stroke-dasharray="7 10.5" fill="none"/>
<path d="M2695.6 1433.4 V1500.4" stroke="#d2d5da" stroke-width="2.3" stroke-dasharray="7 10.5" fill="none"/>
<path d="M2758.6 1433.4 V1500.4" stroke="#d2d5da" stroke-width="2.3" stroke-dasharray="7 10.5" fill="none"/>
<path d="M2821.6 1433.4 V1500.4" stroke="#d2d5da" stroke-width="2.3" stroke-dasharray="7 10.5" fill="none"/>
<path d="M2884.6 1433.4 V1500.4" stroke="#d2d5da" stroke-width="2.3" stroke-dasharray="7 10.5" fill="none"/>
<path d="M2884.6 1500.4 L2947.6 1433.4 L2960 1433.4 V1512.4 H2884.6Z" fill="url(#gf)"/>
<polyline points="2317.6,1500.4 2380.6,1500.4 2443.6,1500.4 2506.6,1500.4 2569.6,1500.4 2632.6,1500.4 2695.6,1500.4 2758.6,1500.4 2821.6,1500.4 2884.6,1500.4 2947.6,1433.4" stroke="#5dbd98" stroke-width="2.1" fill="none"/>
<circle cx="2317.6" cy="1500.4" r="5.6" fill="#f9fbfd" stroke="#4fa98a" stroke-width="1.8"/>
<circle cx="2380.6" cy="1500.4" r="5.6" fill="#f9fbfd" stroke="#4fa98a" stroke-width="1.8"/>
<circle cx="2443.6" cy="1500.4" r="5.6" fill="#f9fbfd" stroke="#4fa98a" stroke-width="1.8"/>
<circle cx="2506.6" cy="1500.4" r="5.6" fill="#f9fbfd" stroke="#4fa98a" stroke-width="1.8"/>
<circle cx="2569.6" cy="1500.4" r="5.6" fill="#f9fbfd" stroke="#4fa98a" stroke-width="1.8"/>
<circle cx="2632.6" cy="1500.4" r="5.6" fill="#f9fbfd" stroke="#4fa98a" stroke-width="1.8"/>
<circle cx="2695.6" cy="1500.4" r="5.6" fill="#f9fbfd" stroke="#4fa98a" stroke-width="1.8"/>
<circle cx="2758.6" cy="1500.4" r="5.6" fill="#f9fbfd" stroke="#4fa98a" stroke-width="1.8"/>
<circle cx="2821.6" cy="1500.4" r="5.6" fill="#f9fbfd" stroke="#4fa98a" stroke-width="1.8"/>
<circle cx="2884.6" cy="1500.4" r="5.6" fill="#f9fbfd" stroke="#4fa98a" stroke-width="1.8"/>
<circle cx="2947.6" cy="1433.4" r="5.6" fill="#f9fbfd" stroke="#4fa98a" stroke-width="1.8"/>
<path d="M2317.6 1543.6 V1610.6" stroke="#d2d5da" stroke-width="2.3" stroke-dasharray="7 10.5" fill="none"/>
<path d="M2380.6 1543.6 V1610.6" stroke="#d2d5da" stroke-width="2.3" stroke-dasharray="7 10.5" fill="none"/>
<path d="M2443.6 1543.6 V1610.6" stroke="#d2d5da" stroke-width="2.3" stroke-dasharray="7 10.5" fill="none"/>
<path d="M2506.6 1543.6 V1610.6" stroke="#d2d5da" stroke-width="2.3" stroke-dasharray="7 10.5" fill="none"/>
<path d="M2569.6 1543.6 V1610.6" stroke="#d2d5da" stroke-width="2.3" stroke-dasharray="7 10.5" fill="none"/>
<path d="M2632.6 1543.6 V1610.6" stroke="#d2d5da" stroke-width="2.3" stroke-dasharray="7 10.5" fill="none"/>
<path d="M2695.6 1543.6 V1610.6" stroke="#d2d5da" stroke-width="2.3" stroke-dasharray="7 10.5" fill="none"/>
<path d="M2758.6 1543.6 V1610.6" stroke="#d2d5da" stroke-width="2.3" stroke-dasharray="7 10.5" fill="none"/>
<path d="M2821.6 1543.6 V1610.6" stroke="#d2d5da" stroke-width="2.3" stroke-dasharray="7 10.5" fill="none"/>
<path d="M2884.6 1543.6 V1610.6" stroke="#d2d5da" stroke-width="2.3" stroke-dasharray="7 10.5" fill="none"/>
<path d="M2884.6 1610.6 L2947.6 1543.6 L2960 1543.6 V1622.6 H2884.6Z" fill="url(#gf)"/>
<polyline points="2317.6,1610.6 2380.6,1610.6 2443.6,1610.6 2506.6,1610.6 2569.6,1610.6 2632.6,1610.6 2695.6,1610.6 2758.6,1610.6 2821.6,1610.6 2884.6,1610.6 2947.6,1543.6" stroke="#5dbd98" stroke-width="2.1" fill="none"/>
<circle cx="2317.6" cy="1610.6" r="5.6" fill="#f9fbfd" stroke="#4fa98a" stroke-width="1.8"/>
<circle cx="2380.6" cy="1610.6" r="5.6" fill="#f9fbfd" stroke="#4fa98a" stroke-width="1.8"/>
<circle cx="2443.6" cy="1610.6" r="5.6" fill="#f9fbfd" stroke="#4fa98a" stroke-width="1.8"/>
<circle cx="2506.6" cy="1610.6" r="5.6" fill="#f9fbfd" stroke="#4fa98a" stroke-width="1.8"/>
<circle cx="2569.6" cy="1610.6" r="5.6" fill="#f9fbfd" stroke="#4fa98a" stroke-width="1.8"/>
<circle cx="2632.6" cy="1610.6" r="5.6" fill="#f9fbfd" stroke="#4fa98a" stroke-width="1.8"/>
<circle cx="2695.6" cy="1610.6" r="5.6" fill="#f9fbfd" stroke="#4fa98a" stroke-width="1.8"/>
<circle cx="2758.6" cy="1610.6" r="5.6" fill="#f9fbfd" stroke="#4fa98a" stroke-width="1.8"/>
<circle cx="2821.6" cy="1610.6" r="5.6" fill="#f9fbfd" stroke="#4fa98a" stroke-width="1.8"/>
<circle cx="2884.6" cy="1610.6" r="5.6" fill="#f9fbfd" stroke="#4fa98a" stroke-width="1.8"/>
<circle cx="2947.6" cy="1543.6" r="5.6" fill="#f9fbfd" stroke="#4fa98a" stroke-width="1.8"/>
</svg>
<svg style="left:808px;top:670px" width="58" height="54" viewBox="808 670 58 54"><path d="M836.9 671.9 L848.1 678.3 L848.1 691.2 L836.9 697.7 L825.7 691.2 L825.7 678.3Z" fill="#2f4254"/><path d="M823.9 694.5 L835.1 700.9 L835.1 713.9 L823.9 720.3 L812.7 713.9 L812.7 700.9Z" fill="#c1c9d1"/><path d="M849.9 694.5 L861.1 700.9 L861.1 713.9 L849.9 720.3 L838.7 713.9 L838.7 700.9Z" fill="#c1c9d1"/></svg>
<svg style="left:805px;top:775.2px" width="61" height="61" viewBox="0 0 61 61"><rect x="18" y="0" width="42" height="42" rx="3" fill="#b9c1ca"/><rect x="0.5" y="17.5" width="43" height="42.5" rx="7" fill="#36485a"/></svg>
<svg style="left:805px;top:885.4px" width="61" height="61" viewBox="0 0 61 61"><rect x="18" y="0" width="42" height="42" rx="3" fill="#b9c1ca"/><rect x="0.5" y="17.5" width="43" height="42.5" rx="7" fill="#36485a"/><path d="M14 28.5 L31 38.5 L14 48.5Z" fill="#fff"/></svg>
<svg style="left:805px;top:995.6px" width="61" height="61" viewBox="0 0 61 61"><rect x="18" y="0" width="42" height="42" rx="3" fill="#b9c1ca"/><rect x="0.5" y="17.5" width="43" height="42.5" rx="7" fill="#36485a"/><path d="M10 26 H32 V40 Q32 49 21 52 Q10 49 10 40Z" fill="#fff"/><path d="M21 26 H32 V40 Q32 49 21 52Z" fill="#c5ccd4"/></svg>
<svg style="left:805px;top:1105.8px" width="61" height="61" viewBox="0 0 61 61"><rect x="18" y="0" width="42" height="42" rx="3" fill="#b9c1ca"/><rect x="0.5" y="17.5" width="43" height="42.5" rx="7" fill="#36485a"/></svg>
<svg style="left:805px;top:1216.0px" width="61" height="61" viewBox="0 0 61 61"><rect x="18" y="0" width="42" height="42" rx="3" fill="#b9c1ca"/><rect x="0.5" y="17.5" width="43" height="42.5" rx="7" fill="#36485a"/></svg>
<svg style="left:808px;top:1322.2px" width="56" height="68" viewBox="808 1322 56 68"><path d="M818.5 1323.4 H853.5 Q855.5 1323.4 856 1325.5 L862.2 1369 H809.4 L816 1325.5 Q816.5 1323.4 818.5 1323.4Z" fill="#b9c1ca"/><path d="M809.4 1369 H862.2 V1382.5 Q862.2 1388.8 856 1388.8 H815.6 Q809.4 1388.8 809.4 1382.5Z" fill="#36485a"/><rect x="815.5" y="1375" width="10.4" height="7.6" fill="#fff"/><rect x="828.8" y="1375" width="10.4" height="7.6" fill="#fff"/></svg>
<svg style="left:804px;top:1434.4px" width="62" height="62" viewBox="804 1434 62 62"><path d="M834.8 1462.5 L864.5 1478.5 L834.8 1494.5 L805.5 1478.5Z" fill="#c1c9d1"/><path d="M834.8 1436.4 L863.7 1452.7 L834.8 1469 L806 1452.7Z" fill="#324558"/></svg>
<svg style="left:808px;top:1544.6px" width="56" height="40" viewBox="808 1545 56 40"><path d="M809 1546 L835.5 1562 L809 1580Z" fill="#c1c9d1"/><path d="M862 1546 L835.5 1562 L862 1580Z" fill="#c1c9d1"/><path d="M835.5 1562 L862 1580 H809Z" fill="#36485a"/></svg>
<div class="a red" id="r2" style="left:1033.5px;top:767.3px;font-size:64.5px;letter-spacing:3.05px">deployment</div>
<div class="a red" id="r3" style="left:1090px;top:1313.5px;letter-spacing:-3px">PVC</div>
<div class="a red" id="r4" style="left:1037px;top:1445.3px;font-size:66.7px;letter-spacing:1.75px">service</div>
<div class="a" style="left:2930px;top:1390px;width:60px;height:60px;border-radius:50%;background:#242e42;box-shadow:0 8px 16px rgba(36,46,66,.3), 0 0 0 3px rgba(255,255,255,.7)"></div><div class="a" style="left:2949px;top:1425px;width:4px;height:4px;border-radius:2px;background:#fff"></div>
</body>
</html>
